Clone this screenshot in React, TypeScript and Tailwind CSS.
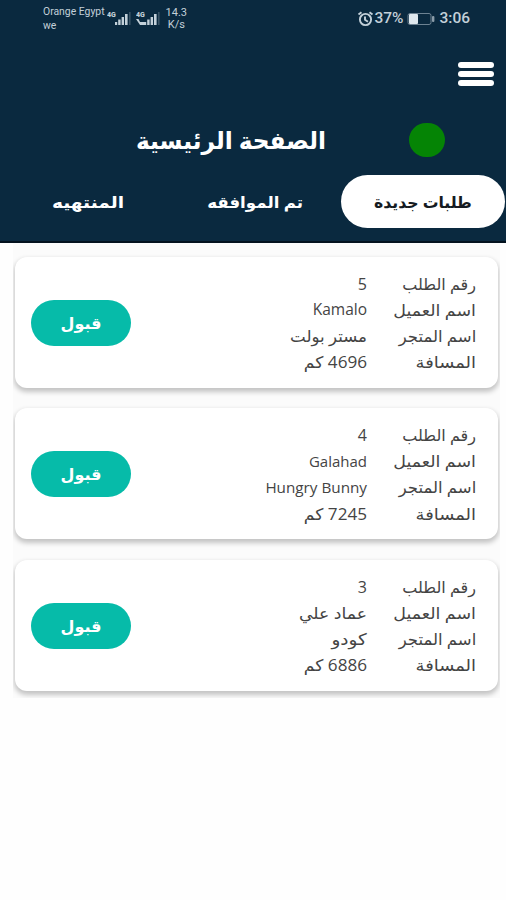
import { ReactNode } from "react";

interface Row {
  value: string;
  className?: string;
}

interface Order {
  id: number;
  rows: Row[];
}

const labels = [
  { title: "رقم الطلب" },
  { title: "اسم العميل", className: "scale-x-109" },
  { title: "اسم المتجر", className: "scale-x-103" },
  { title: "المسافة", className: "scale-x-112" },
];

const orders: Order[] = [
  {
    id: 5,
    rows: [
      { value: "5" },
      { value: "Kamalo", className: "text-[15.5px]" },
      { value: "مستر بولت", className: "scale-x-104" },
      { value: "4696 كم", className: "scale-x-107" },
    ],
  },
  {
    id: 4,
    rows: [
      { value: "4" },
      { value: "Galahad", className: "text-[15px]" },
      { value: "Hungry Bunny", className: "text-[15.25px]" },
      { value: "7245 كم", className: "scale-x-107" },
    ],
  },
  {
    id: 3,
    rows: [
      { value: "3" },
      { value: "عماد علي", className: "scale-x-108" },
      { value: "كودو", className: "scale-x-115" },
      { value: "6886 كم", className: "scale-x-107" },
    ],
  },
];

const Signal = ({ roaming }: { roaming?: boolean }) => (
  <svg width="25" height="16" viewBox="0 0 25 16" className="shrink-0">
    <text x="0" y="7" fontSize="7" fontWeight="900" fill="#c3d0d9">
      4G
    </text>
    <g fill="#c3d0d9">
      <rect x="8" y="12" width="2.2" height="3" />
      <rect x="11.2" y="9.5" width="2.4" height="5.5" />
      <rect x="14.6" y="7" width="2.4" height="8" />
      <rect x="18" y="4" width="2.6" height="11" />
      <rect x="22" y="2" width="1.6" height="13" opacity="0.25" />
      {roaming && <path d="M0 9h2.5l1.5 3h5v3H4z" />}
    </g>
  </svg>
);

const StatusBar = () => (
  <div
    dir="ltr"
    className="flex h-9 items-start pl-[43px] pr-9 font-['Roboto',sans-serif] text-[#c3d0d9]"
  >
    <div className="mt-[5px] text-[10.4px] leading-[14px]">
      Orange Egypt
      <br />
      we
    </div>
    <div className="mt-[10px] ml-[2px] flex gap-1">
      <Signal />
      <Signal roaming />
    </div>
    <div className="mt-[7px] ml-[5px] text-center text-[11px] leading-[12px]">
      14.3
      <br />
      K/s
    </div>
    <div className="mt-[10px] ml-auto flex h-[18px] items-center text-[15.5px] font-medium">
      <svg
        width="17"
        height="16"
        viewBox="0 0 16 16"
        fill="none"
        stroke="currentColor"
        strokeWidth="1.9"
      >
        <circle cx="8" cy="8.5" r="5.6" />
        <path d="M1 3.5 4 1.3M15 3.5 12 1.3M7.5 5.5v3.2l3 2" />
      </svg>
      <span>37%</span>
      <svg width="28" height="14" viewBox="0 0 28 14" className="ml-1">
        <rect
          x="1"
          y="1.5"
          width="23"
          height="11"
          rx="2"
          fill="none"
          stroke="#6d8292"
        />
        <rect x="2" y="2" width="9" height="10" rx="1" fill="#dfe8ee" />
        <rect x="25" y="4" width="2.4" height="6" rx="1" fill="#8b9ca9" />
      </svg>
      <span className="ml-1">3:06</span>
    </div>
  </div>
);

const Tab = ({ active, children }: { active?: boolean; children: ReactNode }) => (
  <button
    className={
      active
        ? "flex h-[53px] items-center justify-center rounded-full bg-white text-[#151b22]"
        : "flex h-[53px] items-center justify-center text-white"
    }
  >
    {children}
  </button>
);

const OrderCard = ({ order }: { order: Order }) => (
  <div className="flex h-[131px] shrink-0 items-center justify-between rounded-xl bg-white pt-px pr-[22px] pl-4 shadow-[0_3px_5px_1px_rgba(0,0,0,0.22)]">
    <div>
      {order.rows.map(({ value, className }, index) => (
        <div key={index} className="flex h-[26.2px] items-center">
          <span className="w-[109px] whitespace-nowrap">
            <span
              className={`inline-block origin-right ${labels[index].className ?? ""}`}
            >
              {labels[index].title}
            </span>
          </span>
          <span
            className={`inline-block origin-right whitespace-nowrap ${className ?? ""}`}
          >
            {value}
          </span>
        </div>
      ))}
    </div>
    <button className="flex h-[46px] w-[100px] items-center justify-center rounded-full bg-[#06bba9] text-base font-bold text-white">
      قبول
    </button>
  </div>
);

export default function App() {
  return (
    <div
      dir="rtl"
      className="h-[900px] w-[506px] overflow-hidden bg-[#fefefe] font-['Open_Sans','DejaVu_Sans',sans-serif]"
    >
      <header className="h-[243px] border-b-2 border-[#03121e] bg-[#0a293f]">
        <StatusBar />
        <div className="flex h-[74px] flex-col gap-[3px] pt-[26px] pr-3">
          <span className="h-[6px] w-9 rounded-full bg-white" />
          <span className="h-[6px] w-9 rounded-full bg-white" />
          <span className="h-[6px] w-9 rounded-full bg-white" />
        </div>
        <div className="flex h-[65px] items-start pt-[13px] pr-[61px]">
          <span className="h-[34px] w-9 rounded-full bg-[#058405]" />
          <h1 className="mr-[83px] origin-right scale-x-97 text-2xl leading-[34px] font-bold whitespace-nowrap text-white">
            الصفحة الرئيسية
          </h1>
        </div>
        <nav className="grid grid-cols-3 gap-1 pr-px pl-[6px] text-base font-bold">
          <Tab active>
            <span className="scale-x-98">طلبات جديدة</span>
          </Tab>
          <Tab>
            <span className="scale-x-104">تم الموافقه</span>
          </Tab>
          <Tab>
            <span className="scale-x-116">المنتهيه</span>
          </Tab>
        </nav>
      </header>
      <main className="pr-[6px] pl-[13px] text-base text-[#444]">
        <div className="flex h-[455px] flex-col gap-[20.4px] overflow-hidden bg-[#fbfbfb] pt-[14px] pr-[2px] pl-[2px]">
          {orders.map((order) => (
            <OrderCard key={order.id} order={order} />
          ))}
        </div>
      </main>
    </div>
  );
}
